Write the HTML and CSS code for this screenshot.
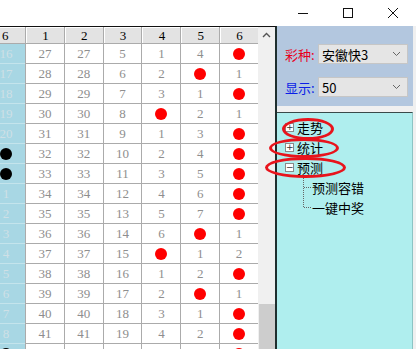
FILE: index.html
```html
<!DOCTYPE html>
<html lang="zh-CN">
<head>
    <meta charset="UTF-8">
    <title>走势分析</title>
    <link rel="stylesheet" href="styles.css">
</head>
<body>
    <!-- Title bar -->
    <div class="titlebar">
        <svg class="winbtn" width="12" height="12" viewBox="0 0 12 12"><path d="M1 6.5h10" stroke="#111" stroke-width="1"/></svg>
        <svg class="winbtn" width="12" height="12" viewBox="0 0 12 12"><rect x="1.5" y="1.5" width="9" height="9" fill="none" stroke="#111" stroke-width="1"/></svg>
        <svg class="winbtn" width="12" height="12" viewBox="0 0 12 12"><path d="M1 1l10 10M11 1L1 11" stroke="#111" stroke-width="1"/></svg>
    </div>

    <div class="main">
        <!-- Trend grid -->
        <div class="grid-wrap">
            <div class="grid">
                <div class="hd first"><span>6</span></div>
                <div class="hd">1</div><div class="hd">2</div><div class="hd">3</div>
                <div class="hd">4</div><div class="hd">5</div><div class="hd">6</div>

                <div class="c0"><span>16</span></div><div class="c">27</div><div class="c">27</div><div class="c">5</div><div class="c">1</div><div class="c">4</div><div class="c"><i class="dot"></i></div>
                <div class="c0"><span>17</span></div><div class="c">28</div><div class="c">28</div><div class="c">6</div><div class="c">2</div><div class="c"><i class="dot"></i></div><div class="c">1</div>
                <div class="c0"><span>18</span></div><div class="c">29</div><div class="c">29</div><div class="c">7</div><div class="c">3</div><div class="c">1</div><div class="c"><i class="dot"></i></div>
                <div class="c0"><span>19</span></div><div class="c">30</div><div class="c">30</div><div class="c">8</div><div class="c"><i class="dot"></i></div><div class="c">2</div><div class="c">1</div>
                <div class="c0"><span>20</span></div><div class="c">31</div><div class="c">31</div><div class="c">9</div><div class="c">1</div><div class="c">3</div><div class="c"><i class="dot"></i></div>
                <div class="c0"><span><i class="bdot"></i></span></div><div class="c">32</div><div class="c">32</div><div class="c">10</div><div class="c">2</div><div class="c">4</div><div class="c"><i class="dot"></i></div>
                <div class="c0"><span><i class="bdot"></i></span></div><div class="c">33</div><div class="c">33</div><div class="c">11</div><div class="c">3</div><div class="c">5</div><div class="c"><i class="dot"></i></div>
                <div class="c0"><span>1</span></div><div class="c">34</div><div class="c">34</div><div class="c">12</div><div class="c">4</div><div class="c">6</div><div class="c"><i class="dot"></i></div>
                <div class="c0"><span>2</span></div><div class="c">35</div><div class="c">35</div><div class="c">13</div><div class="c">5</div><div class="c">7</div><div class="c"><i class="dot"></i></div>
                <div class="c0"><span>3</span></div><div class="c">36</div><div class="c">36</div><div class="c">14</div><div class="c">6</div><div class="c"><i class="dot"></i></div><div class="c">1</div>
                <div class="c0"><span>4</span></div><div class="c">37</div><div class="c">37</div><div class="c">15</div><div class="c"><i class="dot"></i></div><div class="c">1</div><div class="c">2</div>
                <div class="c0"><span>5</span></div><div class="c">38</div><div class="c">38</div><div class="c">16</div><div class="c">1</div><div class="c">2</div><div class="c"><i class="dot"></i></div>
                <div class="c0"><span>6</span></div><div class="c">39</div><div class="c">39</div><div class="c">17</div><div class="c">2</div><div class="c"><i class="dot"></i></div><div class="c">1</div>
                <div class="c0"><span>7</span></div><div class="c">40</div><div class="c">40</div><div class="c">18</div><div class="c">3</div><div class="c">1</div><div class="c"><i class="dot"></i></div>
                <div class="c0"><span>8</span></div><div class="c">41</div><div class="c">41</div><div class="c">19</div><div class="c">4</div><div class="c">2</div><div class="c"><i class="dot"></i></div>
                <!-- partly scrolled-out row: only the marks show -->
                <div class="c0"><span><i class="bdot"></i></span></div><div class="c"></div><div class="c"></div><div class="c"></div><div class="c"></div><div class="c"></div><div class="c"><i class="dot"></i></div>
            </div>

            <!-- Vertical scrollbar -->
            <div class="vscroll">
                <svg class="arrow" width="17" height="17" viewBox="0 0 17 17"><path d="M5 10l3.5-3.5L12 10" fill="none" stroke="#555" stroke-width="1.4"/></svg>
                <div class="thumb"></div>
            </div>
        </div>

        <!-- Right side panel -->
        <div class="side">
            <div class="settings">
                <div class="field">
                    <label class="lbl red">彩种:</label>
                    <div class="combo"><span>安徽快3</span>
                        <svg width="9" height="6" viewBox="0 0 9 6"><path d="M1 1l3.5 3.5L8 1" fill="none" stroke="#666" stroke-width="1"/></svg>
                    </div>
                </div>
                <div class="field">
                    <label class="lbl blue">显示:</label>
                    <div class="combo"><span>50</span>
                        <svg width="9" height="6" viewBox="0 0 9 6"><path d="M1 1l3.5 3.5L8 1" fill="none" stroke="#666" stroke-width="1"/></svg>
                    </div>
                </div>
            </div>

            <!-- Tree -->
            <div class="tree">
                <div class="node"><i class="box">+</i>走势</div>
                <div class="node"><i class="box">+</i>统计</div>
                <div class="node"><i class="box">−</i>预测</div>
                <div class="children">
                    <div class="leaf">预测容错</div>
                    <div class="leaf last">一键中奖</div>
                </div>
            </div>
        </div>
    </div>

    <!-- Red annotation rings -->
    <div class="ring r1"></div>
    <div class="ring r2"></div>
    <div class="ring r3"></div>
</body>
</html>
```

FILE: styles.css
```css
body {
    margin: 0;
    width: 416px;
    height: 349px;
    overflow: hidden;
    background-color: #fff;
    font-family: "Noto Sans CJK SC", sans-serif;
    position: relative;
}

/* Title bar */
.titlebar {
    height: 26px;
    display: flex;
    justify-content: flex-end;
    align-items: center;
    gap: 33px;
    padding-right: 17px;
}

.winbtn {
    display: block;
}

.main {
    display: flex;
    height: 323px;
}

/* Trend grid */
.grid-wrap {
    display: flex;
    border-top: 1px solid #111;
    border-right: 2px solid #1f2f2f;
    width: 275px;
    overflow: hidden;
}

.grid {
    width: 258px;
    display: grid;
    grid-template-columns: 25px repeat(6, 1fr);
    grid-template-rows: 16px;
    grid-auto-rows: 19px;
    gap: 1px;
    background-color: #ababab;
    align-content: start;
    font-family: "Liberation Serif", serif;
    font-size: 13px;
}

.hd {
    background-color: #e3e3e3;
    border-left: 1px solid #fff;
    border-top: 1px solid #fff;
    color: #000;
    display: flex;
    align-items: center;
    justify-content: center;
    line-height: 1;
}

.hd.first {
    border-left: none;
    justify-content: flex-start;
    padding-left: 2px;
}

.c {
    background-color: #fff;
    color: #8e8e8e;
    display: flex;
    align-items: center;
    justify-content: center;
}

.c0 {
    background-color: #a8d7e4;
    color: #cfe0e6;
    overflow: hidden;
    box-shadow: 0 1px 0 #c4e4ec;
    display: flex;
    align-items: center;
}

.c0 span {
    flex: none;
    width: 38px;
    margin-left: -13px;
    display: flex;
    justify-content: center;
}

.dot {
    width: 12px;
    height: 12px;
    border-radius: 50%;
    background-color: #f00;
}

.bdot {
    width: 12px;
    height: 12px;
    border-radius: 50%;
    background-color: #000;
}

/* Scrollbar */
.vscroll {
    width: 17px;
    background-color: #f0f0f0;
    display: flex;
    flex-direction: column;
}

.arrow {
    display: block;
}

.thumb {
    margin-top: auto;
    height: 45px;
    background-color: #cdcdcd;
    margin-left: 1px;
}

/* Side panel */
.side {
    width: 139px;
    background-color: #f0f0f0;
    display: flex;
    flex-direction: column;
}

.settings {
    width: 136px;
    height: 80px;
    box-sizing: border-box;
    background-color: #b3c7df;
    padding: 18px 0 0 8px;
    display: flex;
    flex-direction: column;
    gap: 13px;
}

.field {
    display: flex;
    align-items: center;
}

.lbl {
    width: 33px;
    font-size: 13px;
}

.red { color: #e8001c; }
.blue { color: #0a1ee6; }

.combo {
    width: 90px;
    height: 20px;
    box-sizing: border-box;
    background-color: #e5e5e5;
    border: 1px solid #c6c6c6;
    display: flex;
    align-items: center;
    justify-content: space-between;
    padding: 0 6px 0 3px;
    font-size: 13px;
    color: #000;
}

/* Tree */
.tree {
    margin-top: 6px;
    flex: 1;
    width: 136px;
    box-sizing: border-box;
    background-color: #afeeee;
    border-top: 1px solid #3a4a4a;
    border-right: 1px solid #8cc4c4;
    padding-top: 4px;
    font-size: 13px;
    color: #000;
}

.node {
    height: 20px;
    display: flex;
    align-items: center;
    padding-left: 8px;
}

.box {
    width: 9px;
    height: 9px;
    box-sizing: border-box;
    border: 1px solid #8a8a8a;
    background-color: #fff;
    font-style: normal;
    font-size: 9px;
    line-height: 7px;
    text-align: center;
    color: #333;
    font-family: "DejaVu Sans", sans-serif;
    margin-right: 3px;
}

.children {
    margin-left: 26px;
    border-left: 1px dotted #666;
    width: 80px;
    height: 30px;
}

.leaf {
    height: 20px;
    display: flex;
    align-items: center;
    position: relative;
    padding-left: 8px;
}

.leaf::before {
    content: "";
    width: 7px;
    border-top: 1px dotted #666;
    position: absolute;
    left: 0;
    top: 10px;
}

/* Annotation rings */
.ring {
    position: absolute;
    border: 3px solid #e8141c;
    border-radius: 50%;
    box-sizing: border-box;
}

.r1 { left: 282px; top: 118px; width: 52px; height: 22px; }
.r2 { left: 269px; top: 138px; width: 70px; height: 20px; }
.r3 { left: 265px; top: 157px; width: 81px; height: 21px; }
```
